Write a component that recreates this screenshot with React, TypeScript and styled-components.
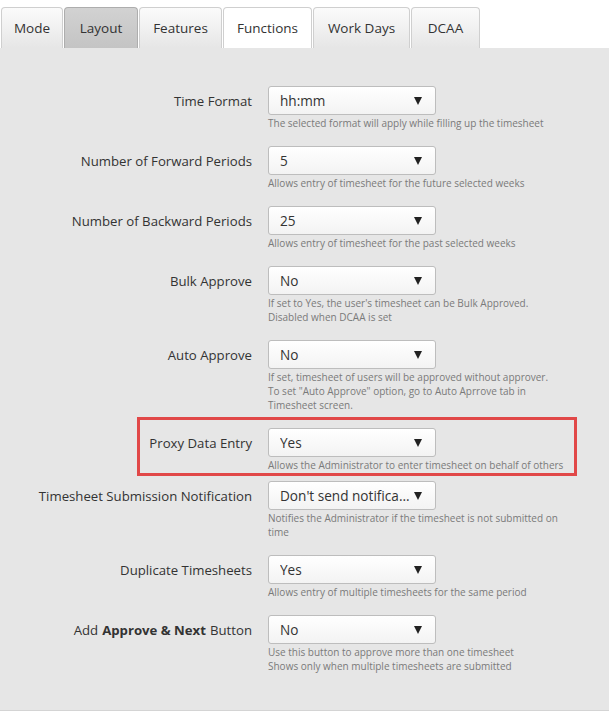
import React from 'react';
import styled, { createGlobalStyle, css } from 'styled-components';

const GlobalStyle = createGlobalStyle`
  html, body {
    margin: 0;
    padding: 0;
    background: #fff;
    font-family: 'Open Sans', 'Noto Sans', sans-serif;
    color: #333;
  }
`;

const Page = styled.div`
  width: 609px;
  height: 711px;
  display: flex;
  flex-direction: column;
  padding-top: 7px;
  box-sizing: border-box;
`;

const TabBar = styled.nav`
  display: flex;
  gap: 1px;
  padding-left: 1px;
  height: 41px;
`;

const Tab = styled.div<{ $w: number; $state?: 'active' | 'hover' }>`
  width: ${p => p.$w}px;
  box-sizing: border-box;
  display: flex;
  align-items: center;
  justify-content: center;
  font-size: 13.5px;
  color: #333;
  border: 1px solid #cfcfcf;
  border-bottom: none;
  border-radius: 4px 4px 0 0;
  background: linear-gradient(#fbfbfb, #e6e6e6);
  ${p =>
    p.$state === 'hover' &&
    css`
      background: linear-gradient(#d2d2d2, #c4c4c4);
      border-color: #adadad;
    `}
  ${p =>
    p.$state === 'active' &&
    css`
      background: #fff;
    `}
`;

const Panel = styled.section`
  flex: 1;
  background: #e6e6e6;
  border-bottom: 1px solid #d4d4d4;
  padding: 38px 0 0;
`;

const Row = styled.div<{ $mb?: number }>`
  display: grid;
  grid-template-columns: 252px 1fr;
  column-gap: 16px;
  margin-bottom: ${p => (p.$mb ?? 16)}px;
`;

const Label = styled.div`
  height: 29px;
  display: flex;
  align-items: center;
  justify-content: flex-end;
  font-size: 13.2px;
  color: #333;
  white-space: nowrap;

  b {
    font-weight: 700;
    margin: 0 4px;
  }
`;

const Control = styled.div`
  display: flex;
  flex-direction: column;
`;

const Select = styled.div`
  width: 168px;
  height: 29px;
  box-sizing: border-box;
  border: 1px solid #bdbdbd;
  border-radius: 3px;
  background: linear-gradient(#ffffff, #f3f3f3);
  display: flex;
  align-items: center;
  padding: 0 11px 0 11px;
  font-size: 13.6px;
  color: #333;
`;

const Value = styled.span`
  flex: 1;
  overflow: hidden;
  white-space: nowrap;
  text-overflow: ellipsis;
  padding-right: 3px;
`;

const Caret = styled.span`
  width: 0;
  height: 0;
  border-left: 4.5px solid transparent;
  border-right: 4.5px solid transparent;
  border-top: 8px solid #222;
  margin-right: 2px;
`;

const Help = styled.div`
  margin-top: 1px;
  font-size: 10px;
  line-height: 14px;
  color: #7a7a7a;
  max-width: 302px;
`;

const Highlight = styled.div`
  position: relative;

  &::after {
    content: '';
    position: absolute;
    left: 137px;
    right: 32px;
    top: -11px;
    bottom: -4px;
    border: 3px solid #e14848;
    pointer-events: none;
  }
`;

type FieldProps = {
  label: React.ReactNode;
  value: string;
  help: string[];
  mb?: number;
};

const Field = ({ label, value, help, mb }: FieldProps) => (
  <Row $mb={mb}>
    <Label>{label}</Label>
    <Control>
      <Select>
        <Value>{value}</Value>
        <Caret />
      </Select>
      <Help>
        {help.map(line => (
          <div key={line}>{line}</div>
        ))}
      </Help>
    </Control>
  </Row>
);

const tabs = [
  { name: 'Mode', w: 62 },
  { name: 'Layout', w: 74, state: 'hover' as const },
  { name: 'Features', w: 83 },
  { name: 'Functions', w: 89, state: 'active' as const },
  { name: 'Work Days', w: 97 },
  { name: 'DCAA', w: 69 },
];

const App = () => {
  return (
    <Page>
      <GlobalStyle />
      <TabBar>
        {tabs.map(t => (
          <Tab key={t.name} $w={t.w} $state={t.state}>
            {t.name}
          </Tab>
        ))}
      </TabBar>
      <Panel>
        <Field
          label="Time Format"
          value="hh:mm"
          help={['The selected format will apply while filling up the timesheet']}
        />
        <Field
          label="Number of Forward Periods"
          value="5"
          help={['Allows entry of timesheet for the future selected weeks']}
        />
        <Field
          label="Number of Backward Periods"
          value="25"
          help={['Allows entry of timesheet for the past selected weeks']}
        />
        <Field
          label="Bulk Approve"
          value="No"
          help={[
            "If set to Yes, the user's timesheet can be Bulk Approved.",
            'Disabled when DCAA is set',
          ]}
        />
        <Field
          label="Auto Approve"
          value="No"
          help={[
            'If set, timesheet of users will be approved without approver.',
            'To set "Auto Approve" option, go to Auto Aprrove tab in',
            'Timesheet screen.',
          ]}
        />
        <Highlight>
          <Field
            label="Proxy Data Entry"
            value="Yes"
            help={['Allows the Administrator to enter timesheet on behalf of others']}
            mb={9}
          />
        </Highlight>
        <Field
          label="Timesheet Submission Notification"
          value="Don't send notifications"
          help={['Notifies the Administrator if the timesheet is not submitted on time']}
        />
        <Field
          label="Duplicate Timesheets"
          value="Yes"
          help={['Allows entry of multiple timesheets for the same period']}
        />
        <Field
          label={
            <>
              Add<b>Approve &amp; Next</b>Button
            </>
          }
          value="No"
          help={[
            'Use this button to approve more than one timesheet',
            'Shows only when multiple timesheets are submitted',
          ]}
        />
      </Panel>
    </Page>
  );
};

export default App;
